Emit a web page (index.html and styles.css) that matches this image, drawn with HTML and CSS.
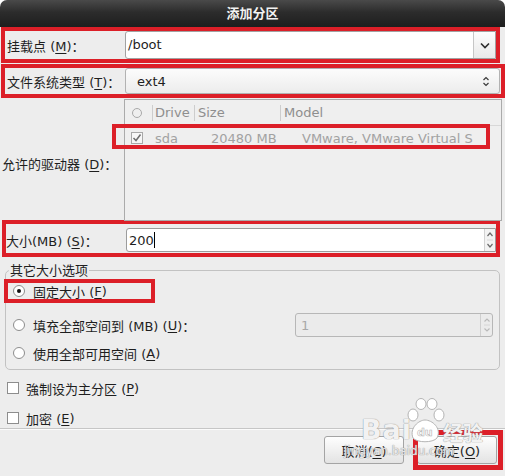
FILE: index.html
```html
<!DOCTYPE html>
<html lang="zh-CN">
<head>
  <meta charset="UTF-8">
  <title>添加分区</title>
  <link rel="stylesheet" href="styles.css">
</head>
<body>
  <div class="dialog">
    <div class="titlebar">添加分区</div>

    <!-- 挂载点 -->
    <div class="field-row mark mount-row">
      <span class="lbl">挂载点 (<u>M</u>)：</span>
      <div class="combo-entry">
        <span class="entry-text">/boot</span>
        <span class="combo-btn">
          <svg width="10" height="7" viewBox="0 0 10 7"><path d="M1 1.5 L5 5.5 L9 1.5" fill="none" stroke="#2e2e2e" stroke-width="1.6"/></svg>
        </span>
      </div>
    </div>

    <!-- 文件系统类型 -->
    <div class="field-row mark fs-row">
      <span class="lbl">文件系统类型 (<u>T</u>)：</span>
      <div class="combo-box">
        <span>ext4</span>
        <svg width="8" height="13" viewBox="0 0 8 13"><path d="M1.5 5 L4 2.5 L6.5 5 M1.5 8 L4 10.5 L6.5 8" fill="none" stroke="#3a3a3a" stroke-width="1.2"/></svg>
      </div>
    </div>

    <!-- 驱动器 -->
    <div class="drives-row">
      <span class="lbl lbl-drive">允许的驱动器 (<u>D</u>)：</span>
      <div class="drive-list">
        <div class="list-head">
          <span class="col col-check"><span class="head-circle"></span></span>
          <span class="col col-drive">Drive</span>
          <span class="col col-size">Size</span>
          <span class="col col-model">Model</span>
        </div>
        <div class="list-row">
          <span class="col col-check">
            <span class="check">
              <svg width="10" height="10" viewBox="0 0 10 10"><path d="M1.5 5 L4 7.5 L8.5 1.5" fill="none" stroke="#6e6e6e" stroke-width="1.5"/></svg>
            </span>
          </span>
          <span class="col col-drive">sda</span>
          <span class="col col-size">20480 MB</span>
          <span class="col col-model">VMware, VMware Virtual S</span>
        </div>
        <div class="row-mark"></div>
      </div>
    </div>

    <!-- 大小 -->
    <div class="field-row mark size-row">
      <span class="lbl lbl-size">大小(MB) (<u>S</u>)：</span>
      <div class="spin">
        <span class="spin-text">200<span class="caret"></span></span>
        <span class="spin-btns">
          <svg width="8" height="22" viewBox="0 0 8 22"><path d="M1.5 7 L4 4 L6.5 7 M1.5 15 L4 18 L6.5 15" fill="none" stroke="#6a6a6a" stroke-width="1.2"/><path d="M1 11 H7" stroke="#d8d8d8"/></svg>
        </span>
      </div>
    </div>

    <!-- 其它大小选项 -->
    <fieldset class="size-opts">
      <legend>其它大小选项</legend>
      <div class="opt opt-fixed">
        <span class="radio on"></span>固定大小 (<u>F</u>)
        <div class="opt-mark"></div>
      </div>
      <div class="opt opt-fill">
        <span class="radio"></span>填充全部空间到 (MB) (<u>U</u>)：
        <div class="spin-off">
          <span class="spin-off-text">1</span>
          <span class="spin-off-btns">
            <svg width="8" height="20" viewBox="0 0 8 20"><path d="M1.5 6.5 L4 4 L6.5 6.5 M1.5 13.5 L4 16 L6.5 13.5" fill="none" stroke="#b9b9b9" stroke-width="1.1"/><path d="M1 10 H7" stroke="#d6d6d6"/></svg>
          </span>
        </div>
      </div>
      <div class="opt opt-all">
        <span class="radio"></span>使用全部可用空间 (<u>A</u>)
      </div>
    </fieldset>

    <div class="chk-row chk-primary"><span class="box"></span>強制设为主分区 (<u>P</u>)</div>
    <div class="chk-row chk-crypt"><span class="box"></span>加密 (<u>E</u>)</div>

    <div class="sep"></div>

    <div class="actions">
      <button class="btn">取消(<u>C</u>)</button>
      <button class="btn btn-ok">确定(<u>O</u>)<span class="ok-mark"></span></button>
    </div>

    <!-- 水印 -->
    <div class="watermark">
      <span class="wm-bai">Bai</span>
      <svg class="wm-paw" width="40" height="46" viewBox="0 0 40 46">
        <g fill="#fff" stroke="#b4b4b4" stroke-width="1">
          <ellipse cx="8" cy="17" rx="5" ry="6"/>
          <ellipse cx="16" cy="6" rx="5" ry="5.5"/>
          <ellipse cx="27" cy="6" rx="5" ry="5.5"/>
          <ellipse cx="34" cy="17" rx="5" ry="6"/>
          <path d="M8 40 C4 30 14 22 20 22 C27 22 37 30 32 40 C28 45 12 45 8 40 Z"/>
        </g>
        <text x="12" y="38" font-size="11" font-weight="bold" fill="#fff" stroke="#b4b4b4" stroke-width="0.6" font-family="DejaVu Sans">du</text>
      </svg>
      <span class="wm-jy">经验</span>
      <span class="wm-url">jingyan.baidu.com</span>
    </div>
  </div>
</body>
</html>
```

FILE: styles.css
```css
* {
  margin: 0;
  padding: 0;
  box-sizing: border-box;
}
body {
  background: #fff;
  font-family: "DejaVu Sans", "Noto Sans CJK SC", sans-serif;
  font-size: 13px;
  color: #1e1e1e;
}
u {
  text-underline-offset: 2px;
}
.dialog {
  position: relative;
  width: 505px;
  height: 476px;
  background: #ededed;
  border-radius: 7px 7px 0 0;
  overflow: hidden;
}
.titlebar {
  height: 27px;
  line-height: 27px;
  text-align: center;
  font-weight: bold;
  color: #f2f2f2;
  background: linear-gradient(#4a4a4a, #2c2c2c 45%, #1e1e1e);
}
/* красные рамки-пометки */
.mark {
  border: 4px solid #dc1f28;
}
.field-row {
  display: flex;
  align-items: center;
}
.lbl {
  flex: none;
  width: 120px;
  padding-left: 2px;
  white-space: nowrap;
}
.mount-row {
  height: 36px;
  margin: 0 5px 0 1px;
}
.combo-entry {
  flex: 1;
  display: flex;
  align-self: stretch;
  background: #fff;
  border: 1px solid #a2a2a2;
  border-radius: 3px 0 0 3px;
}
.entry-text {
  flex: 1;
  padding-left: 2px;
  line-height: 26px;
}
.combo-btn {
  width: 22px;
  display: flex;
  align-items: center;
  justify-content: center;
  border-left: 1px solid #c6c6c6;
  background: linear-gradient(#fdfdfd, #e9e9e9);
}
.fs-row {
  height: 34px;
  margin: 1px 0 0 1px;
}
.combo-box {
  flex: 1;
  align-self: stretch;
  margin-right: 1px;
  display: flex;
  align-items: center;
  justify-content: space-between;
  padding: 0 9px 0 11px;
  border: 1px solid #b2b2b2;
  border-radius: 3px;
  background: linear-gradient(#fcfcfc, #ececec);
}
/* список дисков */
.drives-row {
  display: flex;
  align-items: center;
  height: 122px;
}
.lbl-drive {
  width: 124px;
  padding: 8px 0 0 2px;
}
.drive-list {
  position: relative;
  align-self: flex-start;
  width: 378px;
  height: 122px;
  margin-top: 1px;
  border: 1px solid #ababab;
  background: #efefef;
  color: #a2a2a2;
}
.list-head,
.list-row {
  display: flex;
  align-items: center;
}
.list-head {
  height: 26px;
  border-bottom: 1px solid #d8d8d8;
  color: #8e8e8e;
}
.list-row {
  height: 24px;
}
.col {
  flex: none;
  display: flex;
  align-items: center;
  height: 16px;
}
.col-check {
  width: 27px;
  padding-left: 7px;
}
.col-drive {
  width: 42px;
  padding-left: 2px;
}
.col-size {
  width: 86px;
  padding-left: 3px;
}
.col-model {
  flex: 1;
  padding-left: 3px;
}
.list-head .col-drive,
.list-head .col-size,
.list-head .col-model {
  border-left: 1px solid #cdcdcd;
}
.list-row .col-check {
  padding-left: 6px;
}
.list-row .col-drive {
  padding-left: 3px;
}
.list-row .col-size {
  padding-left: 17px;
}
.list-row .col-model {
  padding-left: 22px;
}
.head-circle {
  width: 10px;
  height: 10px;
  border: 1px solid #a9a9a9;
  border-radius: 50%;
}
.check {
  width: 12px;
  height: 12px;
  display: flex;
  align-items: center;
  justify-content: center;
  border: 1px solid #a8a8a8;
  background: #f7f7f7;
}
.row-mark {
  position: absolute;
  left: -13px;
  top: 24px;
  width: 378px;
  height: 25px;
  border: 4px solid #dc1f28;
}
/* размер */
.size-row {
  height: 37px;
  margin: 0 5px 0 2px;
}
.lbl-size {
  padding: 3px 0 0 0;
}
.spin {
  flex: 1;
  display: flex;
  align-self: flex-end;
  height: 24px;
  margin-bottom: 1px;
  background: #fff;
  border: 1px solid #9c9c9c;
  border-radius: 3px 0 0 3px;
}
.spin-text {
  flex: 1;
  display: flex;
  align-items: center;
  padding-left: 2px;
}
.caret {
  width: 1px;
  height: 16px;
  background: #000;
}
.spin-btns {
  width: 11px;
  display: flex;
  align-items: center;
  justify-content: center;
  border-left: 1px solid #d2d2d2;
  background: #f3f3f3;
}
/* группа опций */
.size-opts {
  margin: 5px 5px 0 5px;
  padding: 0 0 4px 0;
  border: 1px solid #c2c2c2;
  border-radius: 5px;
}
.size-opts legend {
  margin-left: 3px;
  padding: 0 1px;
  line-height: 17px;
}
.opt {
  position: relative;
  display: flex;
  align-items: center;
  height: 24px;
  white-space: nowrap;
}
.opt-fill {
  height: 30px;
  margin-top: 7px;
}
.opt-all {
  margin-top: 1px;
}
.radio {
  position: relative;
  flex: none;
  width: 12px;
  height: 12px;
  margin: 0 8px 0 7px;
  border: 1px solid #8d8d8d;
  border-radius: 50%;
  background: #fff;
}
.radio.on::after {
  content: "";
  position: absolute;
  left: 3px;
  top: 3px;
  width: 4px;
  height: 4px;
  border-radius: 50%;
  background: #111;
}
.opt-mark {
  position: absolute;
  left: -2px;
  top: 0;
  width: 151px;
  height: 24px;
  border: 4px solid #dc1f28;
}
.spin-off {
  display: flex;
  width: 198px;
  height: 24px;
  margin: 0 6px 0 auto;
  border: 1px solid #b7b7b7;
  border-radius: 3px;
  background: #ebebeb;
  color: #a8a8a8;
}
.spin-off-text {
  flex: 1;
  display: flex;
  align-items: center;
  padding-left: 5px;
}
.spin-off-btns {
  width: 12px;
  display: flex;
  align-items: center;
  justify-content: center;
  border-left: 1px solid #cfcfcf;
}
/* чекбоксы */
.chk-row {
  display: flex;
  align-items: center;
  height: 22px;
  margin-top: 7px;
}
.chk-crypt {
  height: 20px;
  margin-top: 9px;
}
.box {
  flex: none;
  width: 12px;
  height: 12px;
  margin: 0 7px;
  border: 1px solid #8d8d8d;
  background: #fff;
}
.sep {
  height: 2px;
  border-top: 1px solid #c6c6c6;
  background: #fbfbfb;
}
.actions {
  display: flex;
  justify-content: flex-end;
  gap: 13px;
  padding: 6px 8px 0 0;
}
.btn {
  position: relative;
  width: 80px;
  height: 28px;
  font: inherit;
  color: #1e1e1e;
  border: 1px solid #a4a4a4;
  border-radius: 3px;
  background: linear-gradient(#fefefe, #e3e3e3);
}
.ok-mark {
  position: absolute;
  left: -5px;
  top: -7px;
  width: 90px;
  height: 40px;
  border: 5px solid #dc1f28;
}
/* водяной знак */
.watermark {
  position: absolute;
  left: 0;
  top: 0;
  width: 505px;
  height: 476px;
  pointer-events: none;
}
.wm-bai,
.wm-jy,
.wm-url {
  position: absolute;
  color: rgba(255, 255, 255, 0.9);
  font-weight: bold;
  text-shadow: 0 0 1px #9a9a9a, 0 0 1px #9a9a9a;
}
.wm-bai {
  left: 361px;
  top: 414px;
  font-size: 27px;
  letter-spacing: 1px;
}
.wm-paw {
  position: absolute;
  left: 405px;
  top: 398px;
}
.wm-jy {
  left: 443px;
  top: 418px;
  font-size: 20px;
}
.wm-url {
  left: 344px;
  top: 444px;
  font-size: 12px;
  font-weight: normal;
  color: rgba(255, 255, 255, 0.75);
}
```
